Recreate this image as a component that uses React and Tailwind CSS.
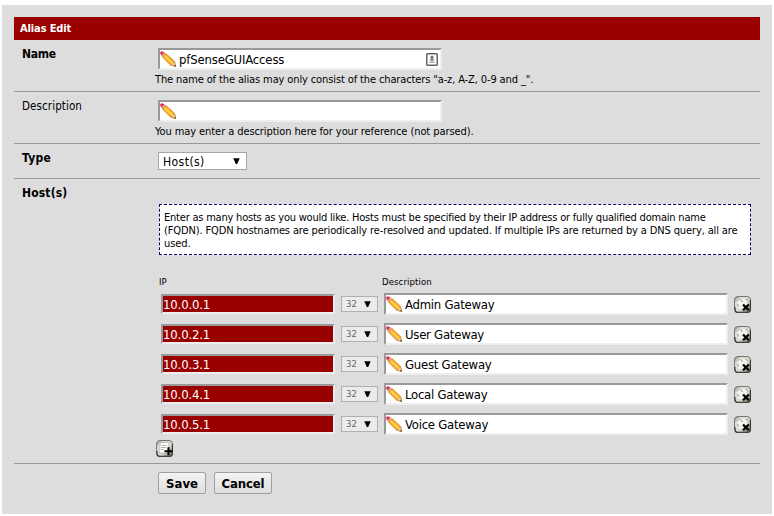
const hosts = [
  { ip: '10.0.0.1', description: 'Admin Gateway' },
  { ip: '10.0.2.1', description: 'User Gateway' },
  { ip: '10.0.3.1', description: 'Guest Gateway' },
  { ip: '10.0.4.1', description: 'Local Gateway' },
  { ip: '10.0.5.1', description: 'Voice Gateway' },
];

function Pencil() {
  return (
    <svg width="17" height="17" viewBox="0 0 17 17" className="block shrink-0">
      <path d="M0 2 Q0 0.4 2 0.3 L4.6 1.6 L1.6 4.9 Z" fill="#dd3358" />
      <path d="M1.4 4.8 L4.5 1.4 L6.2 2.7 L2.8 6.6 Z" fill="#e3a98c" />
      <path d="M2.6 6.2 L6 2.6 L14.6 10.4 L15.6 15.4 L10.6 14.2 Z" fill="#f9af22" stroke="#d8842a" strokeWidth="0.8" />
      <path d="M4.8 5 L13 12.6" stroke="#ffd860" strokeWidth="1.6" />
      <path d="M14.4 10.8 L15.8 15.6 L10.9 14 L12.2 12.9 Z" fill="#f0cf9f" stroke="#b9853f" strokeWidth="0.5" />
      <path d="M13.9 14.9 L15.3 13.6 L15.9 15.7 Z" fill="#5b4634" />
    </svg>
  );
}

function ContactBadge() {
  return (
    <svg width="12" height="13" viewBox="0 0 12 13" className="block shrink-0">
      <rect x="0.75" y="0.75" width="10.5" height="11.5" rx="0.8" fill="#fff" stroke="#666" strokeWidth="1.5" />
      <circle cx="6" cy="4.2" r="1.4" fill="#666" />
      <path d="M3.6 7.4 L4.6 5.5 H7.4 L8.4 7.4 Z" fill="#777" />
      <path d="M3.5 9.2 H8.5" stroke="#888" strokeWidth="1.1" />
    </svg>
  );
}

function IconTile({ children, id }) {
  return (
    <svg width="17" height="17" viewBox="0 0 17 17" className="block shrink-0">
      <defs>
        <linearGradient id={id} x1="0" y1="0" x2="1" y2="1">
          <stop offset="0" stopColor="#85857c" />
          <stop offset="0.25" stopColor="#deded8" />
          <stop offset="0.6" stopColor="#d8d8d0" />
          <stop offset="1" stopColor="#66665a" />
        </linearGradient>
      </defs>
      <rect x="0.5" y="0.5" width="16" height="16" rx="3.5" fill={`url(#${id})`} stroke="#77776e" strokeWidth="1" />
      <path d="M1 11 V13.5 Q1 16.3 3.5 16.3 H13.5 Q16.4 16.3 16.4 13.5 V4" fill="none" stroke="#33332b" strokeWidth="1.1" />
      {children}
    </svg>
  );
}

function DeleteIcon({ id }) {
  return (
    <IconTile id={id}>
      <path d="M3 3.5 L7.5 2.5 L13.5 4 L13 9 L9 13.5 L4 12.5 Z" fill="#f6f6f4" opacity="0.85" />
      <path d="M3 5.5 L5.5 3 M6.5 3 L8.5 6 M3.5 8 L4.8 10.5 M12 3 L14.2 5.5" fill="none" stroke="#8a8a82" strokeWidth="0.9" />
      <path d="M9 8.5 L14.8 14.3 M14.8 8.5 L9 14.3" stroke="#000" strokeWidth="2.3" />
    </IconTile>
  );
}

function AddIcon() {
  return (
    <IconTile id="add-tile">
      <path d="M4.5 2.5 H13 L12 13 H3 Z" fill="#fbfbfb" stroke="#aaa" strokeWidth="0.6" />
      <path d="M5.5 5.5 H10.5 M5 7.5 H10 M4.8 9.5 H8" stroke="#aaa" strokeWidth="0.9" />
      <path d="M12.5 7.2 V15.2 M8.5 11.2 H16.5" stroke="#000" strokeWidth="2.1" />
    </IconTile>
  );
}

function Arrow() {
  return (
    <svg width="7" height="7" viewBox="0 0 7 7" className="block shrink-0">
      <path d="M0.3 0.3 H6.7 L4.2 6 H2.8 Z" fill="#000" />
    </svg>
  );
}

const inset = 'border-2 border-t-[#999] border-l-[#999] border-r-[#eee] border-b-[#eee]';

export default function App() {
  return (
    <div className="h-[516px] w-[774px] overflow-hidden bg-white pt-[5px] pl-[2px] font-['DejaVu_Sans_Condensed','DejaVu_Sans',sans-serif] text-[11px] text-black">
      <div className="h-[509px] w-[770px] bg-[#ddd] pt-3 pl-3">
        <div className="w-[746px] whitespace-nowrap">
          <div className="flex h-[23px] items-center bg-[#990000] pt-0.5 pl-1.5 text-[11px] font-bold tracking-[-0.12px] text-white">
            <span>Alias Edit</span>
          </div>

          <div className="flex h-[52px] border-b border-[#999]">
            <div className="w-[141px] pt-1.5 pl-2 text-[12px] leading-4 font-bold tracking-[-0.3px]">Name</div>
            <div className="pt-2">
              <div className={`ml-[3px] flex h-[22px] w-[284px] items-center bg-white pr-0.5 text-[13px] ${inset}`}>
                <Pencil />
                <span className="ml-0.5 flex-1 pt-0.5 tracking-[-0.17px]">pfSenseGUIAccess</span>
                <ContactBadge />
              </div>
              <div className="mt-[3px] leading-[14px] tracking-[-0.12px]">The name of the alias may only consist of the characters "a-z, A-Z, 0-9 and _".</div>
            </div>
          </div>

          <div className="flex h-[52px] border-b border-[#999]">
            <div className="w-[141px] pt-1.5 pl-2 text-[11.5px] leading-4 tracking-[0.1px]">Description</div>
            <div className="pt-2">
              <div className={`ml-[3px] flex h-[22px] w-[284px] items-center bg-white ${inset}`}>
                <Pencil />
              </div>
              <div className="mt-[3px] leading-[14px] tracking-[-0.08px]">You may enter a description here for your reference (not parsed).</div>
            </div>
          </div>

          <div className="flex h-[35px] border-b border-[#999]">
            <div className="w-[144px] pt-1.5 pl-2 text-[12px] leading-4 font-bold tracking-[0.25px]">Type</div>
            <div className="mt-2 flex h-[18px] w-[89px] items-center justify-between border border-[#a6a6a6] bg-white pr-1.5 pl-1 text-[12px]">
              <span className="pt-px tracking-[0.45px]">Host(s)</span>
              <Arrow />
            </div>
          </div>

          <div className="flex h-[285px] border-b border-[#999]">
            <div className="w-[142px] pt-1.5 pl-2 text-[12px] leading-4 font-bold tracking-[0.15px]">Host(s)</div>
            <div className="pt-[25px]">
              <div className="ml-[3px] h-[51px] w-[592px] border border-dashed border-[#000066] bg-white pt-1.5 pl-1 leading-[13px]">
                <div className="tracking-[-0.21px]">Enter as many hosts as you would like. Hosts must be specified by their IP address or fully qualified domain name</div>
                <div className="tracking-[-0.13px]">(FQDN). FQDN hostnames are periodically re-resolved and updated. If multiple IPs are returned by a DNS query, all are</div>
                <div className="tracking-[-0.1px]">used.</div>
              </div>
              <div className="mt-5 ml-[3px] flex h-[15px] items-center text-[9.5px]">
                <span className="w-[223px]">IP</span>
                <span className="tracking-[0.1px]">Description</span>
              </div>
              <div className="mt-[3px] ml-[5px] flex flex-col gap-2">
                {hosts.map((host, i) => (
                  <div key={host.ip} className="flex h-[22px] items-center">
                    <div className={`flex h-5 w-[174px] items-center bg-[#990000] text-[13px] text-white ${inset}`}>
                      <span className="pt-0.5 tracking-[-0.15px]">{host.ip}</span>
                    </div>
                    <div className="ml-1.5 flex h-4 w-[37px] items-center justify-between border border-[#b0b0b0] bg-[#ebebeb] pr-1.5 pl-1 text-[9.5px] text-[#666]">
                      <span className="pt-px">32</span>
                      <Arrow />
                    </div>
                    <div className={`ml-1.5 flex h-[22px] w-[344px] items-center bg-white text-[13px] ${inset}`}>
                      <Pencil />
                      <span className="ml-0.5 pt-0.5 tracking-[-0.25px]">{host.description}</span>
                    </div>
                    <div className="ml-1.5">
                      <DeleteIcon id={`delete-tile-${i}`} />
                    </div>
                  </div>
                ))}
              </div>
              <div className="mt-[5px]">
                <AddIcon />
              </div>
            </div>
          </div>

          <div className="flex gap-2 pt-2 pl-[144px] text-[13px] font-bold">
            <div className="flex h-[22px] w-12 items-center justify-center rounded-[2px] border border-[#a0a0a0] bg-linear-to-b from-[#f4f4f4] to-[#dedede]">
              <span className="pt-px">Save</span>
            </div>
            <div className="flex h-[22px] w-[58px] items-center justify-center rounded-[2px] border border-[#a0a0a0] bg-linear-to-b from-[#f4f4f4] to-[#dedede]">
              <span className="pt-px tracking-[-0.1px]">Cancel</span>
            </div>
          </div>
        </div>
      </div>
    </div>
  );
}
